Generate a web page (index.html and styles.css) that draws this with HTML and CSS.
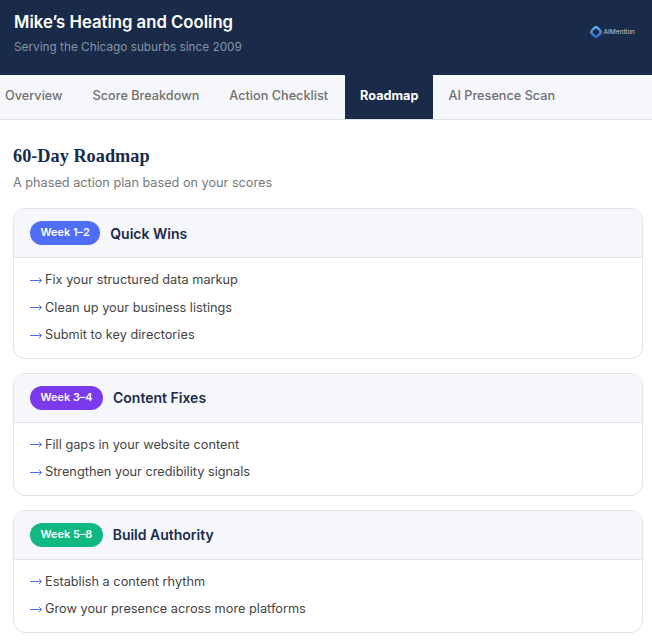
FILE: index.html
```html
<!DOCTYPE html>
<html lang="en">
<head>
<meta charset="utf-8">
<title>60-Day Roadmap</title>
<link rel="stylesheet" href="styles.css">
</head>
<body>
<svg class="defs" aria-hidden="true">
  <symbol id="arrow" viewBox="0 0 12 7"><path d="M0 3.5H11.5M9 1L11.5 3.5L9 6" fill="none" stroke="#4f6ef7" stroke-width="1"/></symbol>
  <linearGradient id="markGrad" x1="0" y1="0" x2="1" y2="1"><stop offset="0" stop-color="#5fb4ea"/><stop offset="1" stop-color="#3566d6"/></linearGradient>
</svg>
<header class="top">
  <div>
    <h1 class="biz">Mike’s Heating and Cooling</h1>
    <p class="tagline">Serving the Chicago suburbs since 2009</p>
  </div>
  <div class="brand">
    <svg class="brand-mark" viewBox="0 0 14 14" aria-hidden="true">
      <rect x="3" y="3" width="8" height="8" rx="2.8" transform="rotate(45 7 7)" fill="none" stroke="url(#markGrad)" stroke-width="2.4"/>
    </svg>
    <span>AIMention</span>
  </div>
</header>
<nav class="tabs">
  <a class="tab">Overview</a>
  <a class="tab">Score Breakdown</a>
  <a class="tab">Action Checklist</a>
  <a class="tab active">Roadmap</a>
  <a class="tab">AI Presence Scan</a>
</nav>
<main class="content">
  <h2 class="title">60-Day Roadmap</h2>
  <p class="sub">A phased action plan based on your scores</p>

  <section class="card">
    <div class="card-head"><span class="pill blue">Week 1–2</span><h3>Quick Wins</h3></div>
    <ul class="items">
      <li><svg class="arrow"><use href="#arrow"/></svg>Fix your structured data markup</li>
      <li><svg class="arrow"><use href="#arrow"/></svg>Clean up your business listings</li>
      <li><svg class="arrow"><use href="#arrow"/></svg>Submit to key directories</li>
    </ul>
  </section>

  <section class="card">
    <div class="card-head"><span class="pill purple">Week 3–4</span><h3>Content Fixes</h3></div>
    <ul class="items">
      <li><svg class="arrow"><use href="#arrow"/></svg>Fill gaps in your website content</li>
      <li><svg class="arrow"><use href="#arrow"/></svg>Strengthen your credibility signals</li>
    </ul>
  </section>

  <section class="card">
    <div class="card-head"><span class="pill green">Week 5–8</span><h3>Build Authority</h3></div>
    <ul class="items">
      <li><svg class="arrow"><use href="#arrow"/></svg>Establish a content rhythm</li>
      <li><svg class="arrow"><use href="#arrow"/></svg>Grow your presence across more platforms</li>
    </ul>
  </section>
</main>
</body>
</html>
```
FILE: styles.css
```css
* { box-sizing: border-box; }
html, body { margin: 0; padding: 0; background: #fff; }
body { font-family: "Inter", "Noto Sans", sans-serif; color: #1a2b4a; overflow: hidden; }
.defs { display: block; width: 0; height: 0; overflow: hidden; }
.top { height: 75px; background: #1a2b4a; display: flex; justify-content: space-between; align-items: flex-start; padding: 10px 17px 0 14px; }
.biz { margin: 0; font-size: 16.7px; line-height: 24px; font-weight: 600; color: #fff; }
.tagline { margin: 3px 0 0; font-size: 11.8px; line-height: 20px; color: #8792a5; }
.brand { display: flex; align-items: center; gap: 0; margin-top: 15px; font-size: 6.6px; color: #c5cad3; }
.brand-mark { width: 14px; height: 14px; display: block; }
.tabs { display: flex; height: 45px; background: #f6f7fb; border-bottom: 1px solid #e3e3e3; }
.tab { padding: 0 15px; font-size: 12.7px; line-height: 42px; color: #6f6f6f; font-weight: 500; }
.tab:first-child { padding-left: 5px; }
.active { margin-left: 2px; background: #1a2b4a; color: #fff; font-weight: 700; height: 44px; }
.content { padding: 25px 9px 0 13px; }
.title { margin: 0; font-family: "Liberation Serif", serif; font-size: 18.3px; line-height: 22px; font-weight: 700; }
.sub { margin: 6px 0 0; font-size: 12.7px; line-height: 20px; color: #77777a; }
.card { margin-top: 14px; border: 1px solid #e3e3df; border-radius: 12px; overflow: hidden; }
.sub + .card { margin-top: 15px; }
.card-head { height: 49px; display: flex; align-items: center; gap: 10px; padding: 0 16px; background: #f6f7fb; border-bottom: 1px solid #e3e3df; }
.card-head h3 { margin: 0; font-size: 14px; font-weight: 600; color: #1a2b4a; }
.pill { color: #fff; font-size: 10.9px; font-weight: 600; line-height: 23px; height: 24px; padding: 0 10.5px; border-radius: 12px; }
.blue { background: #4f6ef7; }
.purple { background: #7c3aed; }
.green { background: #10b981; }
.items { list-style: none; margin: 0; padding: 8px 16px 9px; }
.items li { font-size: 12.75px; line-height: 27.5px; color: #444; display: flex; align-items: center; }
.arrow { flex: none; width: 12px; height: 7px; margin: 1px 3px 0 0; }
```
